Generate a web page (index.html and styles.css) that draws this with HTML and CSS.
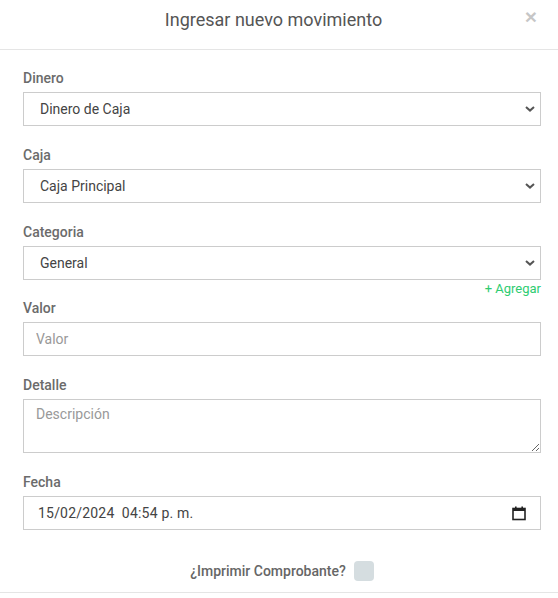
FILE: index.html
```html
<!DOCTYPE html>
<html lang="es">
<head>
<meta charset="utf-8">
<title>Ingresar nuevo movimiento</title>
<link rel="stylesheet" href="styles.css">
</head>
<body>
<div class="modal">
  <div class="modal-header">
    <h4 class="modal-title">Ingresar nuevo movimiento</h4>
    <button class="close" type="button">&times;</button>
  </div>
  <form class="modal-body">
    <div class="group">
      <label class="label">Dinero</label>
      <select class="control select"><option>Dinero de Caja</option></select>
    </div>
    <div class="group">
      <label class="label">Caja</label>
      <select class="control select"><option>Caja Principal</option></select>
    </div>
    <div class="group group-tight">
      <label class="label">Categoria</label>
      <select class="control select"><option>General</option></select>
      <div class="add-row"><a class="add-link">+ Agregar</a></div>
    </div>
    <div class="group">
      <label class="label">Valor</label>
      <input class="control input" type="text" placeholder="Valor">
    </div>
    <div class="group">
      <label class="label">Detalle</label>
      <textarea class="control textarea" placeholder="Descripción"></textarea>
    </div>
    <div class="group">
      <label class="label">Fecha</label>
      <div class="control date">
        <span class="date-value">15/02/2024&nbsp; 04:54 p. m.</span>
        <svg class="cal" width="14" height="15" viewBox="0 0 14 15">
          <rect x="1" y="2.5" width="12" height="11" fill="none" stroke="#222" stroke-width="1.6"/>
          <rect x="1" y="2" width="12" height="3" fill="#222"/>
          <rect x="3" y="0.5" width="1.6" height="2.5" fill="#222"/>
          <rect x="9.4" y="0.5" width="1.6" height="2.5" fill="#222"/>
        </svg>
      </div>
    </div>
    <div class="print-row">
      <span class="print-label">¿Imprimir Comprobante?</span>
      <span class="checkbox"></span>
    </div>
  </form>
</div>
</body>
</html>
```
FILE: styles.css
```css
* { box-sizing: border-box; }
html, body { margin: 0; padding: 0; background: #fff; }
body { font-family: Roboto, "Open Sans", Arial, sans-serif; color: #333; }

.modal { width: 558px; border-bottom: 1px solid #e5e5e5; }

.modal-header {
  position: relative;
  height: 50px;
  padding-top: 9px;
  border-bottom: 1px solid #e5e5e5;
}
.modal-title {
  margin: 0;
  padding-right: 11px;
  text-align: center;
  font-size: 18px;
  line-height: 22px;
  font-weight: 400;
  color: #555;
}
.close {
  position: absolute;
  top: 6px;
  right: 21px;
  border: 0;
  padding: 0;
  background: none;
  font-family: "Liberation Sans", Arial, sans-serif;
  font-size: 21px;
  font-weight: 700;
  line-height: 21px;
  color: #000;
  opacity: 0.22;
}

.modal-body {
  padding: 18px 17px 11px 23px;
  margin: 0;
}

.group { display: flex; flex-direction: column; margin-bottom: 19px; }
.group-tight { margin-bottom: 0; }

.label {
  font-size: 14px;
  line-height: 20px;
  font-weight: 500;
  color: #6b6b6b;
  margin-bottom: 4px;
}

.control {
  width: 518px;
  height: 34px;
  border: 1px solid #ccc;
  border-radius: 0;
  background: #fff;
  font-family: Roboto, Arial, sans-serif;
  font-size: 14px;
  color: #444;
  margin: 0;
}

.select {
  appearance: none;
  -webkit-appearance: none;
  padding: 0 24px 0 16px;
  background-image: url("data:image/svg+xml,%3Csvg xmlns='http://www.w3.org/2000/svg' width='10' height='6' viewBox='0 0 10 6'%3E%3Cpath d='M1 1l4 3.6L9 1' fill='none' stroke='%23555' stroke-width='2'/%3E%3C/svg%3E");
  background-repeat: no-repeat;
  background-position: right 5px center;
}

.input { padding: 0 12px; }
.input::placeholder, .textarea::placeholder { color: #999; }

.textarea {
  height: 54px;
  padding: 6px 12px;
  resize: vertical;
  display: block;
}

.date {
  display: flex;
  align-items: center;
  justify-content: space-between;
  padding: 0 14px 0 14px;
}
.date-value { letter-spacing: 0.2px; color: #444; }
.cal { display: block; }

.add-row {
  display: flex;
  justify-content: flex-end;
  height: 18px;
  align-items: center;
}
.add-link {
  font-size: 13px;
  line-height: 18px;
  color: #2ecc71;
  text-decoration: none;
  cursor: pointer;
}

.print-row {
  display: flex;
  justify-content: center;
  align-items: center;
  gap: 8px;
  padding-top: 12px;
}
.print-label {
  font-size: 14px;
  font-weight: 500;
  color: #666;
}
.checkbox {
  width: 20px;
  height: 20px;
  border-radius: 4px;
  background: #d5dde0;
}
```
